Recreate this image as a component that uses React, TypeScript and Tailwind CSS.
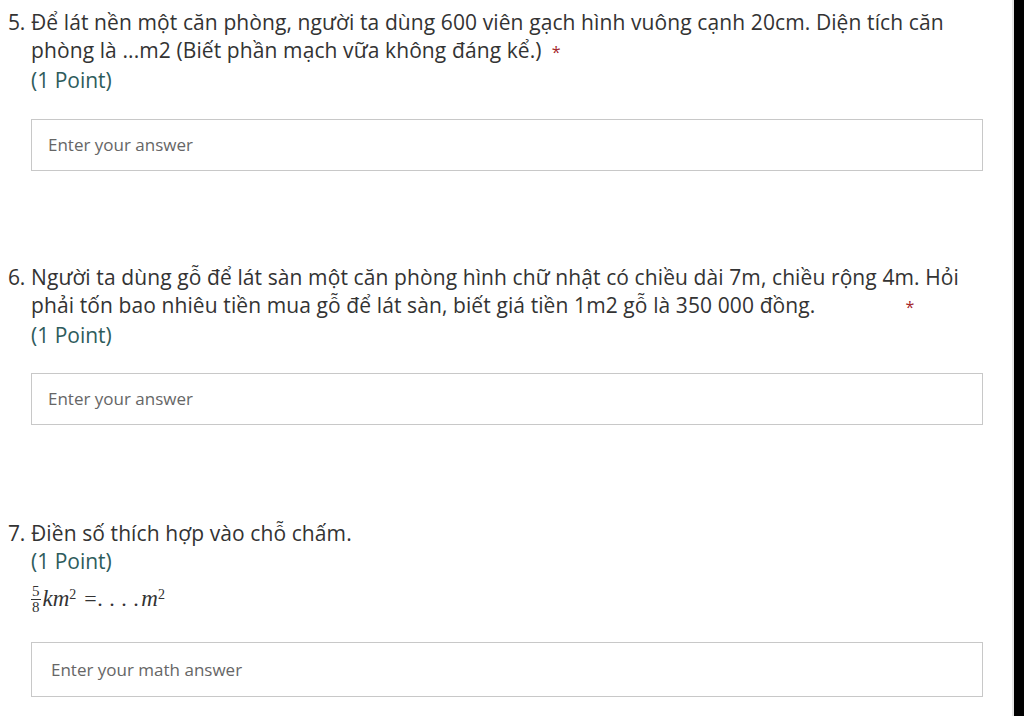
const font = { fontFamily: '"Open Sans", "Noto Sans", sans-serif' };

function Question({
  num,
  lines,
  star,
  children,
}: {
  num: string;
  lines: React.ReactNode;
  star?: React.ReactNode;
  children?: React.ReactNode;
}) {
  return (
    <div className="flex">
      <div className="w-[23px] shrink-0 text-[21px] leading-[28px] tracking-[-0.3px] text-[#333]">{num}</div>
      <div className="flex-1">
        <div className="whitespace-nowrap text-[21px] leading-[28px] tracking-[0.1px] text-[#333]">
          {lines}
          {star}
        </div>
        <div className="text-[21px] leading-[28px] text-[#2e5c5c]">(1 Point)</div>
        {children}
      </div>
    </div>
  );
}

export default function App() {
  return (
    <div className="flex h-[716px] w-[1024px] overflow-hidden bg-white" style={font}>
      <div className="flex-1 pl-[8px] pr-[29px] pt-[8px]">
        <Question
          num="5."
          lines={
            <>
              Để lát nền một căn phòng, người ta dùng 600 viên gạch hình vuông cạnh 20cm. Diện tích căn
              <br />
              phòng là ...m2 (Biết phần mạch vữa không đáng kể.)
            </>
          }
          star={<span className="ml-[10px] text-[16px] text-[#a4262c]">*</span>}
        >
          <div className="mt-[25px] flex h-[52px] items-center border border-[#c8c8c8] px-[16px] text-[17px] text-[#666]">
            Enter your answer
          </div>
        </Question>

        <div className="mt-[92px]">
          <Question
            num="6."
            lines={
              <>
                Người ta dùng gỗ để lát sàn một căn phòng hình chữ nhật có chiều dài 7m, chiều rộng 4m. Hỏi
                <br />
                phải tốn bao nhiêu tiền mua gỗ để lát sàn, biết giá tiền 1m2 gỗ là 350 000 đồng.
              </>
            }
            star={<span className="ml-[90px] text-[16px] text-[#a4262c]">*</span>}
          >
            <div className="mt-[24px] flex h-[52px] items-center border border-[#c8c8c8] px-[16px] text-[17px] text-[#666]">
              Enter your answer
            </div>
          </Question>
        </div>

        <div className="mt-[94px]">
          <Question num="7." lines={<>Điền số thích hợp vào chỗ chấm.</>}>
            <div
              className="mt-[6px] flex h-[36px] items-center text-[#333] italic"
              style={{ fontFamily: '"Liberation Serif", serif' }}
            >
              <span className="inline-flex flex-col items-center not-italic text-[15px] leading-[13px]">
                <span className="border-b border-[#333] px-[1px] pb-[1px]">5</span>
                <span className="pt-[1px]">8</span>
              </span>
              <span className="ml-[2px] text-[23px] leading-[28px]">
                km<sup className="text-[14px] not-italic">2</sup>
              </span>
              <span className="ml-[8px] text-[22px] not-italic leading-[28px] tracking-[0.5px]">=. . . .</span>
              <span className="ml-[2px] text-[23px] leading-[28px]">
                m<sup className="text-[14px] not-italic">2</sup>
              </span>
            </div>
            <div className="mt-[25px] flex h-[55px] items-center border border-[#c8c8c8] px-[19px] text-[17px] text-[#666]">
              Enter your math answer
            </div>
          </Question>
        </div>
      </div>
      <div className="w-[2px] bg-[#e6e6e6]" />
      <div className="w-[10px] bg-black" />
    </div>
  );
}
